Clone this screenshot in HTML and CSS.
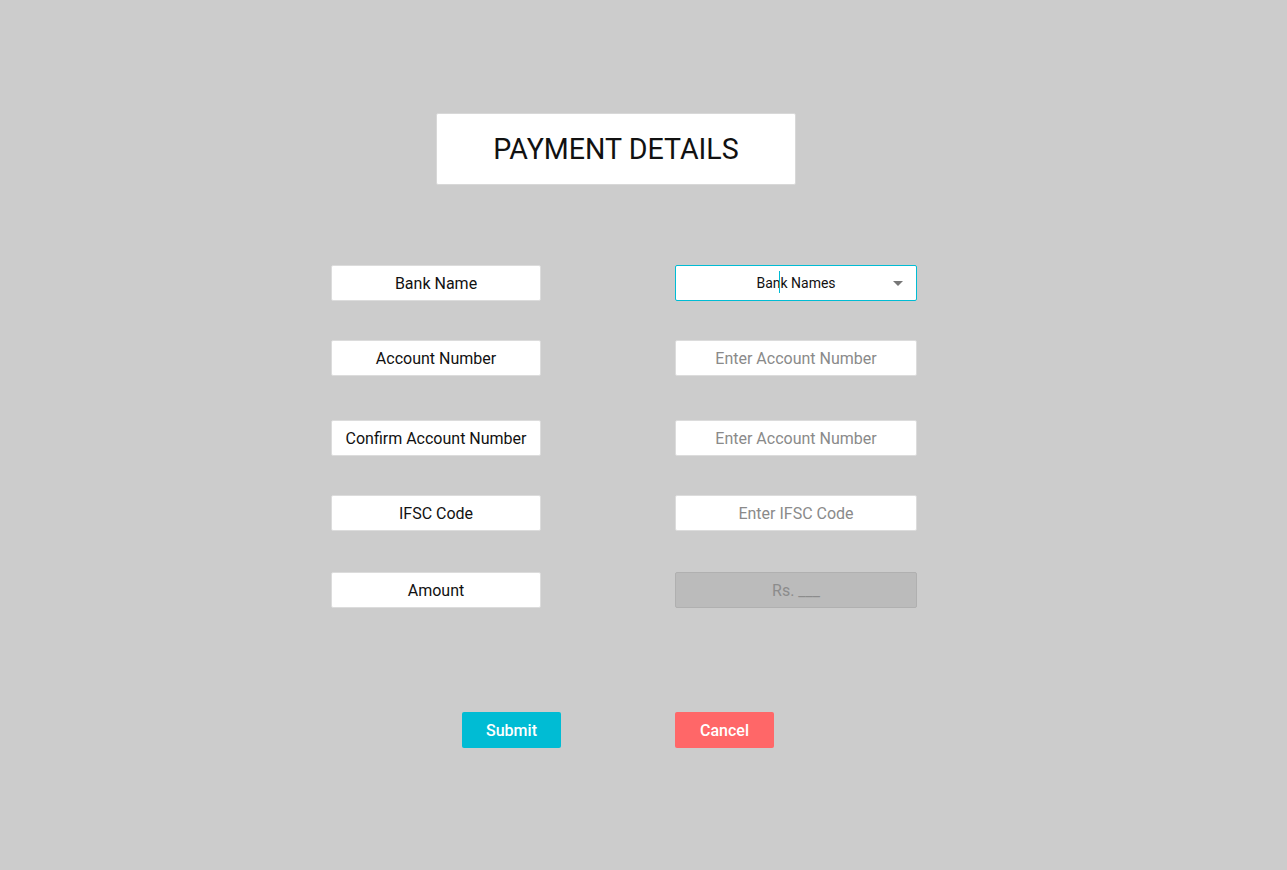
FILE: index.html
```html
<!DOCTYPE html>
<html>
<head>
<meta charset="utf-8">
<link rel="stylesheet" href="styles.css">
</head>
<body>
<div class="page">
  <div class="title-row">
    <div class="title">PAYMENT DETAILS</div>
  </div>
  <div class="form">
    <div class="row">
      <div class="label">Bank Name</div>
      <div class="field select">
        <span class="select-text">Ban<span class="caret"></span>k Names</span>
        <svg class="arrow" width="10" height="5" viewBox="0 0 10 5"><path d="M0 0 L10 0 L5 5 Z" fill="#777"/></svg>
      </div>
    </div>
    <div class="row r2">
      <div class="label">Account Number</div>
      <div class="field placeholder">Enter Account Number</div>
    </div>
    <div class="row r3">
      <div class="label">Confirm Account Number</div>
      <div class="field placeholder">Enter Account Number</div>
    </div>
    <div class="row r4">
      <div class="label">IFSC Code</div>
      <div class="field placeholder">Enter IFSC Code</div>
    </div>
    <div class="row r5">
      <div class="label">Amount</div>
      <div class="field disabled">Rs. ___</div>
    </div>
  </div>
  <div class="buttons">
    <button class="btn submit">Submit</button>
    <button class="btn cancel">Cancel</button>
  </div>
</div>
</body>
</html>
```
FILE: styles.css
```css
html, body {
  margin: 0;
  padding: 0;
  background: #cccccc;
  font-family: Roboto, "Liberation Sans", sans-serif;
}
.page {
  padding-top: 113px;
  height: 870px;
  box-sizing: border-box;
}
.title-row {
  padding-left: 436px;
}
.title {
  width: 360px;
  height: 72px;
  box-sizing: border-box;
  background: #fff;
  border: 1px solid #d8d8d8;
  border-radius: 2px;
  display: flex;
  align-items: center;
  justify-content: center;
  font-size: 28.6px;
  color: #111;
}
.form {
  padding-left: 331px;
  padding-top: 80px;
  display: flex;
  flex-direction: column;
}
.row {
  display: flex;
  gap: 134px;
}
.r2 { margin-top: 39px; }
.r3 { margin-top: 44px; }
.r4 { margin-top: 39px; }
.r5 { margin-top: 41px; }
.label, .field {
  height: 36px;
  box-sizing: border-box;
  background: #fff;
  border: 1px solid #dcdcdc;
  border-radius: 2px;
  display: flex;
  align-items: center;
  justify-content: center;
  font-size: 16px;
  color: #111;
}
.label { width: 210px; }
.field { width: 242px; position: relative; }
.placeholder { color: #8a8a8a; }
.select {
  border-color: #00bcd4;
  font-size: 14px;
  color: #111;
  padding-top: 2px;
}
.select-text { position: relative; }
.caret {
  display: inline-block;
  width: 1px;
  height: 22px;
  background: #00bcd4;
  vertical-align: middle;
  margin: -4px 0 0 -1px;
}
.arrow {
  position: absolute;
  right: 13px;
  top: 15px;
}
.disabled {
  background: #bbbbbb;
  border-color: #b0b0b0;
  color: #8c8c8c;
}
.buttons {
  padding-left: 462px;
  padding-top: 104px;
  display: flex;
  gap: 114px;
}
.btn {
  width: 99px;
  height: 36px;
  border: none;
  border-radius: 2px;
  font-family: Roboto, "Liberation Sans", sans-serif;
  font-size: 16px;
  font-weight: 500;
  color: #fff;
  padding: 0;
}
.submit { background: #00bcd4; }
.cancel { background: #ff6768; }
```
